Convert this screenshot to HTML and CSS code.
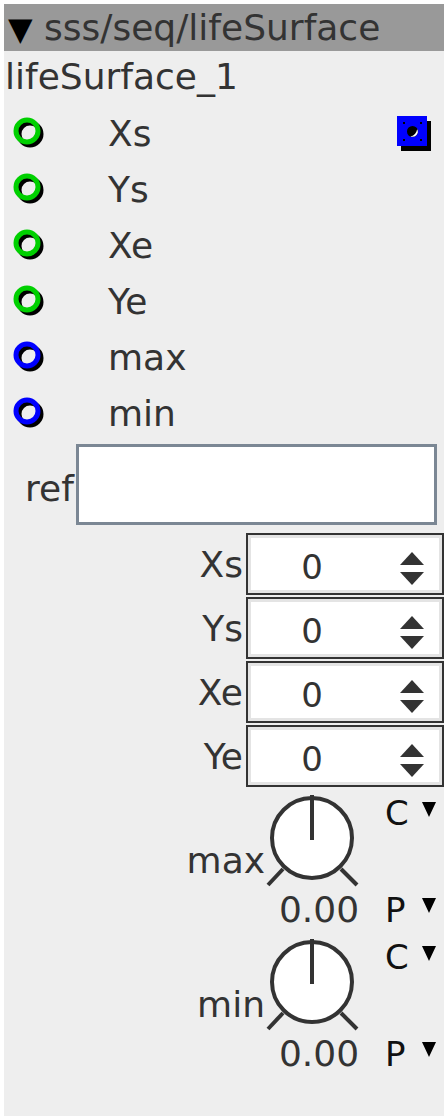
FILE: index.html
```html
<!DOCTYPE html>
<html>
<head>
<meta charset="utf-8">
<link rel="stylesheet" href="styles.css">
</head>
<body>
<div class="panel">
  <div class="title"><span class="tri">▼</span> sss/seq/lifeSurface</div>
  <div class="instance">lifeSurface_1</div>
  <div class="inlets">
    <div class="inlet">
      <svg class="port" width="36" height="36" viewBox="0 0 36 36"><circle cx="19" cy="19" r="11" fill="none" stroke="#000" stroke-width="5"/><circle cx="16" cy="16" r="11" fill="none" stroke="#00d000" stroke-width="5"/></svg>
      <span class="inlet-label">Xs</span>
      <svg class="outlet" width="36" height="36" viewBox="0 0 36 36"><rect x="4" y="5" width="30" height="30" fill="#000"/><rect x="0" y="0" width="30" height="30" fill="#0000ff"/><rect x="6" y="6" width="2" height="2" fill="#000"/><rect x="23" y="6" width="2" height="2" fill="#000"/><rect x="6" y="23" width="2" height="2" fill="#000"/><rect x="23" y="23" width="2" height="2" fill="#000"/><circle cx="15.5" cy="15.5" r="5.5" fill="#000"/><path d="M20.2 13.2 A5.2 5.2 0 0 1 13.4 20.3 Q18.8 19.6 20.2 13.2 Z" fill="#fff"/></svg>
    </div>
    <div class="inlet">
      <svg class="port" width="36" height="36" viewBox="0 0 36 36"><circle cx="19" cy="19" r="11" fill="none" stroke="#000" stroke-width="5"/><circle cx="16" cy="16" r="11" fill="none" stroke="#00d000" stroke-width="5"/></svg>
      <span class="inlet-label">Ys</span>
    </div>
    <div class="inlet">
      <svg class="port" width="36" height="36" viewBox="0 0 36 36"><circle cx="19" cy="19" r="11" fill="none" stroke="#000" stroke-width="5"/><circle cx="16" cy="16" r="11" fill="none" stroke="#00d000" stroke-width="5"/></svg>
      <span class="inlet-label">Xe</span>
    </div>
    <div class="inlet">
      <svg class="port" width="36" height="36" viewBox="0 0 36 36"><circle cx="19" cy="19" r="11" fill="none" stroke="#000" stroke-width="5"/><circle cx="16" cy="16" r="11" fill="none" stroke="#00d000" stroke-width="5"/></svg>
      <span class="inlet-label">Ye</span>
    </div>
    <div class="inlet">
      <svg class="port" width="36" height="36" viewBox="0 0 36 36"><circle cx="19" cy="19" r="11" fill="none" stroke="#000" stroke-width="5"/><circle cx="16" cy="16" r="11" fill="none" stroke="#0000ff" stroke-width="5"/></svg>
      <span class="inlet-label">max</span>
    </div>
    <div class="inlet">
      <svg class="port" width="36" height="36" viewBox="0 0 36 36"><circle cx="19" cy="19" r="11" fill="none" stroke="#000" stroke-width="5"/><circle cx="16" cy="16" r="11" fill="none" stroke="#0000ff" stroke-width="5"/></svg>
      <span class="inlet-label">min</span>
    </div>
  </div>
  <div class="ref-row">
    <span class="ref-label">ref</span>
    <div class="ref-box"></div>
  </div>
  <div class="spins">
    <div class="spin-row"><span class="spin-label">Xs</span><div class="spin"><span class="spin-val">0</span><svg class="arrows" width="26" height="34" viewBox="0 0 26 34"><polygon points="13,0 25,13 1,13" fill="#333"/><polygon points="1,20 25,20 13,33" fill="#333"/></svg></div></div>
    <div class="spin-row"><span class="spin-label">Ys</span><div class="spin"><span class="spin-val">0</span><svg class="arrows" width="26" height="34" viewBox="0 0 26 34"><polygon points="13,0 25,13 1,13" fill="#333"/><polygon points="1,20 25,20 13,33" fill="#333"/></svg></div></div>
    <div class="spin-row"><span class="spin-label">Xe</span><div class="spin"><span class="spin-val">0</span><svg class="arrows" width="26" height="34" viewBox="0 0 26 34"><polygon points="13,0 25,13 1,13" fill="#333"/><polygon points="1,20 25,20 13,33" fill="#333"/></svg></div></div>
    <div class="spin-row"><span class="spin-label">Ye</span><div class="spin"><span class="spin-val">0</span><svg class="arrows" width="26" height="34" viewBox="0 0 26 34"><polygon points="13,0 25,13 1,13" fill="#333"/><polygon points="1,20 25,20 13,33" fill="#333"/></svg></div></div>
  </div>
  <div class="knob-sec first">
    <span class="knob-label">max</span>
    <svg class="knob" width="94" height="98" viewBox="0 0 94 98"><circle cx="46" cy="45" r="40" fill="#fff" stroke="#333" stroke-width="4"/><line x1="46" y1="47" x2="46" y2="2" stroke="#333" stroke-width="4"/><line x1="2" y1="92" x2="17" y2="76" stroke="#333" stroke-width="4"/><line x1="75" y1="76" x2="91" y2="92" stroke="#333" stroke-width="4"/></svg>
    <span class="mode mode-c"><span class="letter">C</span><svg class="dd" width="14" height="16" viewBox="0 0 14 16"><polygon points="0,0 14,0 7,15" fill="#000"/></svg></span>
    <span class="knob-val">0.00</span>
    <span class="mode mode-p"><span class="letter">P</span><svg class="dd" width="14" height="16" viewBox="0 0 14 16"><polygon points="0,0 14,0 7,15" fill="#000"/></svg></span>
  </div>
  <div class="knob-sec">
    <span class="knob-label">min</span>
    <svg class="knob" width="94" height="98" viewBox="0 0 94 98"><circle cx="46" cy="45" r="40" fill="#fff" stroke="#333" stroke-width="4"/><line x1="46" y1="47" x2="46" y2="2" stroke="#333" stroke-width="4"/><line x1="2" y1="92" x2="17" y2="76" stroke="#333" stroke-width="4"/><line x1="75" y1="76" x2="91" y2="92" stroke="#333" stroke-width="4"/></svg>
    <span class="mode mode-c"><span class="letter">C</span><svg class="dd" width="14" height="16" viewBox="0 0 14 16"><polygon points="0,0 14,0 7,15" fill="#000"/></svg></span>
    <span class="knob-val">0.00</span>
    <span class="mode mode-p"><span class="letter">P</span><svg class="dd" width="14" height="16" viewBox="0 0 14 16"><polygon points="0,0 14,0 7,15" fill="#000"/></svg></span>
  </div>
</div>
</body>
</html>
```
FILE: styles.css
```css
html, body {
  margin: 0;
  padding: 0;
  background: #fff;
}
body {
  padding: 4px;
  font-family: "DejaVu Sans", sans-serif;
  color: #333;
}
.panel {
  width: 440px;
  height: 1112px;
  background: #eeeeee;
  display: flex;
  flex-direction: column;
}
.title {
  height: 47px;
  background: #999999;
  font-size: 36px;
  line-height: 47px;
  padding-left: 4px;
  white-space: nowrap;
  overflow: hidden;
}
.tri {
  color: #000;
  font-size: 32px;
}
.instance {
  height: 54px;
  font-size: 36px;
  line-height: 52px;
  padding-left: 1px;
}
.inlets {
  display: flex;
  flex-direction: column;
}
.inlet {
  height: 56px;
  display: flex;
  align-items: center;
}
.port {
  margin-left: 7px;
  flex: none;
}
.inlet-label {
  margin-left: 61px;
  font-size: 36px;
}
.outlet {
  margin-left: auto;
  margin-right: 11px;
  margin-top: 2px;
}
.ref-row {
  margin-top: 3px;
  display: flex;
  align-items: center;
  height: 81px;
}
.ref-label {
  font-size: 36px;
  margin-left: 21px;
  margin-top: 8px;
}
.ref-box {
  margin-left: auto;
  margin-right: 7px;
  width: 355px;
  height: 75px;
  background: #fff;
  border: 3px solid #7b8794;
}
.spins {
  margin-top: 8px;
  display: flex;
  flex-direction: column;
  gap: 2px;
}
.spin-row {
  display: flex;
  align-items: center;
  justify-content: flex-end;
  height: 62px;
}
.spin-label {
  font-size: 36px;
  margin-right: 3px;
}
.spin {
  width: 194px;
  height: 52px;
  padding-top: 6px;
  border: 2px solid #333;
  box-shadow: inset 0 0 0 3px #e4e4e4;
  background: #fff;
  display: flex;
  align-items: center;
}
.spin-val {
  width: 128px;
  text-align: center;
  font-size: 34px;
}
.arrows {
  margin-left: 23px;
  margin-top: 4px;
}
.knob-sec {
  height: 144px;
  display: grid;
  grid-template-columns: 262px 94px 84px;
  grid-template-rows: 98px 46px;
}
.knob-sec.first {
  margin-top: 6px;
}
.knob-label {
  grid-column: 1;
  grid-row: 1;
  justify-self: end;
  align-self: end;
  font-size: 36px;
  margin-bottom: 10px;
  margin-right: 1px;
}
.knob {
  grid-column: 2;
  grid-row: 1;
  align-self: start;
}
.knob-val {
  grid-column: 2;
  grid-row: 2;
  align-self: start;
  justify-self: center;
  font-size: 36px;
  line-height: 34px;
  margin-left: 12px;
  margin-top: 2px;
}
.mode {
  grid-column: 3;
  align-self: start;
  color: #111;
  font-size: 34px;
  padding-left: 25px;
  display: flex;
  align-items: flex-start;
}
.letter {
  width: 37px;
}
.mode-c {
  grid-row: 1;
  line-height: 40px;
}
.mode-c .dd {
  margin-top: 9px;
}
.mode-p {
  grid-row: 2;
  line-height: 34px;
  margin-top: 2px;
}
.mode-p .dd {
  margin-top: 5px;
}
```
